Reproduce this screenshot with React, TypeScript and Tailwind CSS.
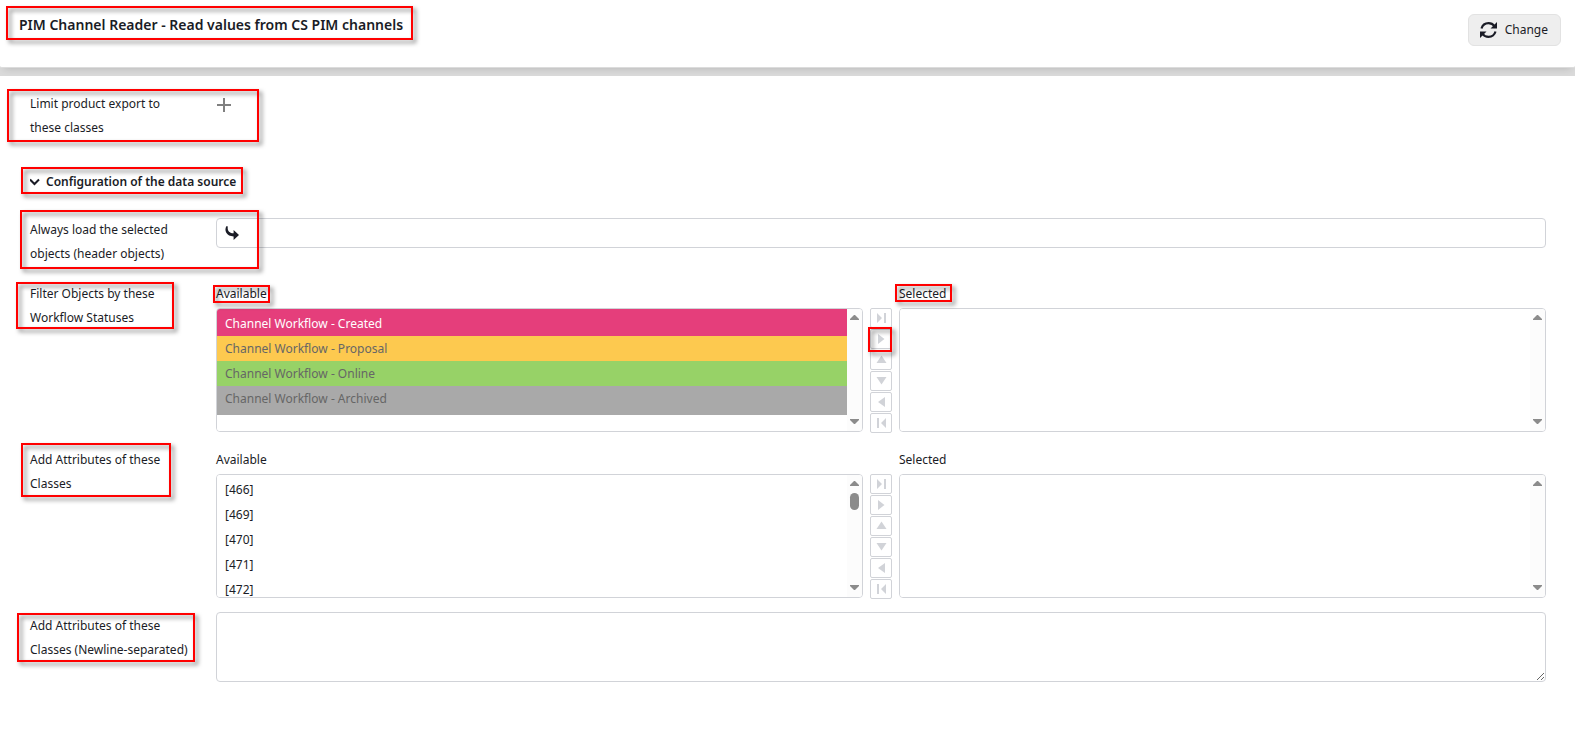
import type { ReactNode } from "react";

function Highlight({ className }: { className: string }) {
  return (
    <span
      aria-hidden="true"
      className={`pointer-events-none absolute z-10 border-2 border-[#ff0000] drop-shadow-[3px_3px_2px_rgba(0,0,0,0.5)] ${className}`}
    />
  );
}

function ScrollBar({ thumb = false }: { thumb?: boolean }) {
  return (
    <div aria-hidden="true" className="flex w-[15px] shrink-0 flex-col items-center bg-[#fcfcfc] pb-[7px] pt-1.5">
      <svg width="9" height="5" viewBox="0 0 9 5" fill="#8b8b8b">
        <path d="M4 0h1l4 4v1H0V4z" />
      </svg>
      {thumb && <div className="mt-[7px] h-[17px] w-[9px] rounded-full bg-[#8b8b8b]" />}
      <svg className="mt-auto" width="9" height="5" viewBox="0 0 9 5" fill="#8b8b8b">
        <path d="M0 0h9v1L5 5H4L0 1z" />
      </svg>
    </div>
  );
}

type Item = { label: string; style?: string };

function ListBox({ id, items, thumb }: { id: string; items: Item[]; thumb?: boolean }) {
  return (
    <div className="flex h-[124px] overflow-hidden rounded border border-[#d1d3d8] bg-white">
      <select id={id} multiple className="block h-full min-w-0 flex-1 overflow-hidden bg-white p-0 outline-none">
        {items.map((item) => (
          <option
            key={item.label}
            className={`box-content h-[17px] px-2 pt-1 first:pt-1.5 ${item.style ?? "pb-1"}`}
          >
            {item.label}
          </option>
        ))}
      </select>
      <ScrollBar thumb={thumb} />
    </div>
  );
}

const moves = [
  { label: "Add all", d: "M7 5l5 5-5 5zM14 5h2v10h-2z" },
  { label: "Add", d: "M8 5l6.500 5L8 15z" },
  { label: "Move up", d: "M11.500 5.500l5 7.500h-10z" },
  { label: "Move down", d: "M6.500 6h10l-5 7.500z" },
  { label: "Remove", d: "M15 5v10l-7-5z" },
  { label: "Remove all", d: "M7 5h2v10H7zM16 5v10l-5-5z" },
];

function DualList({
  id,
  items,
  thumb,
  annotated = false,
}: {
  id: string;
  items: Item[];
  thumb?: boolean;
  annotated?: boolean;
}) {
  return (
    <div className="grid grid-cols-[1fr_22px_1fr] gap-x-[7px] gap-y-0.5">
      <div className="relative justify-self-start">
        <label htmlFor={`${id}-available`}>Available</label>
        {annotated && <Highlight className="-left-[3px] top-[3px] h-[18px] w-[57px]" />}
      </div>
      <div />
      <div className="relative justify-self-start">
        <label htmlFor={`${id}-selected`}>Selected</label>
        {annotated && <Highlight className="-left-1 top-0.5 h-[18px] w-[57px]" />}
      </div>
      <ListBox id={`${id}-available`} items={items} thumb={thumb} />
      <div className="flex flex-col gap-px">
        {moves.map((move) => (
          <div key={move.label} className="relative flex">
            <button
              type="button"
              aria-label={move.label}
              className="flex h-5 w-[22px] items-center justify-center rounded-xs border border-[#d1d3d8] bg-white"
            >
              <svg className="shrink-0" width="22" height="20" viewBox="0 0 22 20" fill="#d1d3d8">
                <path d={move.d} />
              </svg>
            </button>
            {annotated && move.label === "Add" && (
              <Highlight className="-left-0.5 -top-0.5 h-[25px] w-6" />
            )}
          </div>
        ))}
      </div>
      <ListBox id={`${id}-selected`} items={[]} />
    </div>
  );
}

function Row({
  htmlFor,
  lines,
  mark,
  className = "",
  labelClass = "",
  children,
}: {
  htmlFor: string;
  lines: string[];
  mark: string;
  className?: string;
  labelClass?: string;
  children: ReactNode;
}) {
  return (
    <div className={`relative grid grid-cols-[186px_1fr] items-start ${className}`}>
      <label htmlFor={htmlFor} className={`whitespace-nowrap ${labelClass}`}>
        {lines[0]}
        <br />
        {lines[1]}
      </label>
      {children}
      <Highlight className={mark} />
    </div>
  );
}

const statuses: Item[] = [
  { label: "Channel Workflow - Created", style: "bg-[#e53e7b] pb-1 text-white" },
  { label: "Channel Workflow - Proposal", style: "bg-[#fdc94f] pb-1 text-[#666]" },
  { label: "Channel Workflow - Online", style: "bg-[#97d267] pb-1 text-[#666]" },
  { label: "Channel Workflow - Archived", style: "bg-[#a9a9a9] pb-2 text-[#666]" },
];

const classes: Item[] = ["[466]", "[469]", "[470]", "[471]", "[472]"].map((label) => ({ label }));

export default function App() {
  return (
    <div className="bg-white font-['Noto_Sans','Open_Sans',sans-serif] text-[12px] leading-6 text-[#1a1c26]">
      <div className="overflow-hidden bg-[#dadada] pb-2">
        <header className="flex h-[68px] items-start justify-between rounded-b-xs border-b border-[#dcdcdc] bg-white pl-[19px] pr-3.5 shadow-[0_4px_8px_-4px_rgba(0,0,0,0.18)]">
          <div className="relative pt-[13px]">
            <h1 className="text-[14px] font-semibold leading-6">
              PIM Channel Reader - Read values from CS PIM channels
            </h1>
            <Highlight className="-left-[13px] top-1.5 h-[34px] w-[407px]" />
          </div>
          <button
            type="button"
            className="mt-3.5 flex h-8 items-center gap-2 rounded-md border border-[#e2e2e2] bg-[#eeeeee] pl-[11px] pr-3"
          >
            <svg width="17" height="16" viewBox="0 0 17 16" fill="none">
              <path
                d="M1.500 6.500C2.500 3 5.300 1.200 8.500 1.200c2.600 0 4.600 1.100 6 3M15.500 9.500c-1 3.500-3.800 5.300-7 5.300-2.600 0-4.600-1.100-6-3"
                stroke="#1a1c26"
                strokeWidth="2.2"
              />
              <path d="M17 0v6.500h-6.500zM0 16V9.500h6.500z" fill="#1a1c26" />
            </svg>
            Change
          </button>
        </header>
      </div>

      <main className="pl-[30px] pr-[29px] pt-4">
        <Row
          htmlFor="limit"
          lines={["Limit product export to", "these classes"]}
          mark="-left-[23px] -top-[3px] h-[53px] w-[252px]"
          className="mb-[30px]"
        >
          <button id="limit" type="button" aria-label="Add class" className="ml-px mt-1.5 size-3.5">
            <svg width="14" height="14" viewBox="0 0 14 14" fill="#808080">
              <path d="M6 0h2v6h6v2H8v6H6V8H0V6h6z" />
            </svg>
          </button>
        </Row>

        <div className="relative mb-6">
          <h2 className="font-semibold">
            <button type="button" aria-expanded="true" className="flex items-center gap-1.5">
              <svg width="10" height="8" viewBox="0 0 10 8" fill="none">
                <path d="M0 1.500l4.500 4.500L9 1.500" stroke="#1a1c26" strokeWidth="2" />
              </svg>
              Configuration of the data source
            </button>
          </h2>
          <Highlight className="-left-[9px] -top-[3px] h-[27px] w-[222px]" />
        </div>

        <Row
          htmlFor="header-objects"
          lines={["Always load the selected", "objects (header objects)"]}
          mark="-left-2.5 -top-2 h-[59px] w-[239px]"
          className="mb-4"
        >
          <div className="flex h-[30px] items-center rounded border border-[#d1d3d8] bg-white pl-2">
            <svg className="shrink-0" width="14" height="14" viewBox="0 0 14 14" fill="#1a1c26">
              <path d="M1.600 0C.2 2 0 4.600 1.300 6.800 2.700 9.100 5 10.300 8.600 10.400V14L14 8.900 8.600 4v3.200C5 7.200 2 5 2.800.4z" />
            </svg>
            <input id="header-objects" type="text" className="h-full min-w-0 flex-1 bg-transparent px-2 outline-none" />
          </div>
        </Row>

        <Row
          htmlFor="status-available"
          lines={["Filter Objects by these", "Workflow Statuses"]}
          mark="-left-3.5 top-0 h-[47px] w-[158px]"
          className="mb-[15px]"
        >
          <DualList id="status" items={statuses} annotated />
        </Row>

        <Row
          htmlFor="class-available"
          lines={["Add Attributes of these", "Classes"]}
          mark="-left-[9px] -top-[5px] h-[54px] w-[150px]"
          className="mb-[13px]"
        >
          <DualList id="class" items={classes} thumb />
        </Row>

        <Row
          htmlFor="class-names"
          lines={["Add Attributes of these", "Classes (Newline-separated)"]}
          mark="-left-[13px] top-px h-[49px] w-[178px]"
          labelClass="pt-0.5"
        >
          <textarea
            id="class-names"
            className="block h-[70px] w-full resize-y rounded border border-[#d1d3d8] bg-white px-2 outline-none"
          />
        </Row>
      </main>
    </div>
  );
}
